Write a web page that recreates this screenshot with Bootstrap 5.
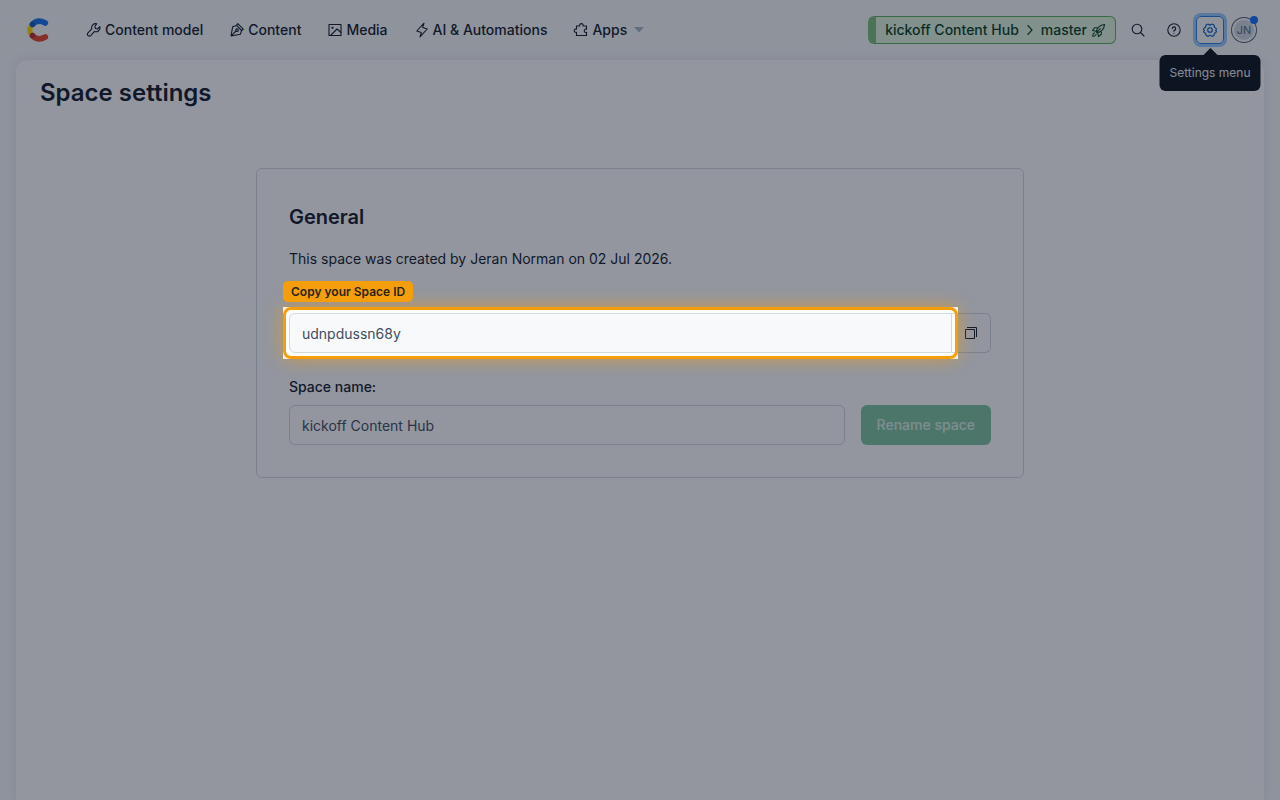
<!DOCTYPE html>
<html lang="en">
<head>
<meta charset="utf-8">
<meta name="viewport" content="width=device-width, initial-scale=1">
<title>Space settings</title>
<link href="https://cdn.jsdelivr.net/npm/bootstrap@5.3.0/dist/css/bootstrap.min.css" rel="stylesheet">
<style>
body{font-family:Inter,"Liberation Sans",sans-serif;font-size:14px;line-height:20px;color:#111b2b;background:#f7f9fa;overflow-x:hidden}
svg{display:block;flex:none}
.line-icon{fill:none;stroke:currentColor;stroke-width:1.1;stroke-linecap:round;stroke-linejoin:round}
.topbar{height:60px;padding:0 24px 0 26px}
.main-nav{gap:26px;margin-left:36px}
.main-nav .nav-link{display:flex;align-items:center;gap:3px;padding:0;color:#111b2b;font-weight:500;white-space:nowrap}
.env-btn{height:28px;padding:0 9px;border:1px solid #5dae5d;border-left:8px solid #7dc27d;border-radius:6px;background:#e2f6df;color:#063f22;font-size:14px;font-weight:500;white-space:nowrap}
.tool-btn{width:28px;height:28px;padding:0;border:0;border-radius:5px;background:transparent;color:#111b2b;display:flex;align-items:center;justify-content:center}
.tool-btn.is-focused{border:1px solid #2a7be0;box-shadow:0 0 0 3px #98cbff;color:#0059c8}
.avatar-btn{width:24px;height:24px;padding:0;border:2px solid #f7f9fa;border-radius:50%;background:#cfd9e0;box-shadow:0 0 0 1px #536171;color:#5a6a7c;font-size:11px;line-height:20px}
.avatar-dot{position:absolute;top:-2px;right:-2px;width:8px;height:8px;border-radius:50%;background:#0f6fff}
.menu-tip{position:absolute;top:39px;left:50%;transform:translateX(-50%);padding:8px 10px;border-radius:6px;background:#0c141c;color:#e7ebee;font-size:12px;white-space:nowrap;z-index:5}
.menu-tip::before{content:"";position:absolute;top:-7px;left:50%;margin-left:-7px;border:7px solid transparent;border-top:0;border-bottom-color:#0c141c}
.sheet{margin:0 16px;padding:17px 24px;border-radius:12px 12px 0 0;background:#fff;box-shadow:0 0 12px rgba(60,60,140,.1)}
.page-title{font-size:24px;line-height:32px;font-weight:600;margin:0}
.panel{max-width:768px;margin:59px auto 0;padding:32px;border:1px solid #cfd9e0;border-radius:6px}
.panel-title{font-size:20px;line-height:32px;font-weight:600;margin:0 0 16px}
.id-row{margin:44px 0 24px}
.field{height:40px;border:1px solid #cfd9e0;border-radius:6px;padding:0 12px;font-size:14px;color:#414d63;background:#fff}
.field:focus{box-shadow:none}
.field[readonly]{background:#f7f9fa;border-radius:6px 0 0 6px}
.copy-btn{width:39px;height:40px;padding:0;border:1px solid #cfd9e0;border-left:0;border-radius:0 6px 6px 0;background:#fff;color:#111b2b;display:flex;align-items:center;justify-content:center}
.rename-btn{height:40px;padding:0 16px;border:0;border-radius:6px;font-size:14px;font-weight:500;white-space:nowrap}
.rename-btn:disabled{background:#80c5a0;color:#dcefe4}
.spotlight{position:absolute;inset:-6px;z-index:20;box-shadow:0 0 0 9999px rgba(15,23,42,.45);pointer-events:none}
.spotlight::after{content:"";position:absolute;inset:0;border:3px solid #f59e0b;border-radius:8px;box-shadow:0 0 18px rgba(245,158,11,.6)}
.spot-label{position:absolute;left:-6px;bottom:51px;z-index:21;padding:1px 8px 0;border-radius:5px;background:#f59e0b;color:#292416;font-size:12px;font-weight:600;white-space:nowrap}
</style>
</head>
<body class="min-vh-100 d-flex flex-column">
<header class="topbar d-flex align-items-center">
  <a href="#" aria-label="Home">
    <svg width="24" height="26" viewBox="0 0 24 26" fill="none" stroke-linecap="round" stroke-width="5.600">
      <path d="M6 7.500Q1.500 13 6 18.500" stroke="#ffda00" stroke-width="5"/>
      <path d="M6.500 7.200Q12 1.500 19.300 6" stroke="#1773eb"/>
      <path d="M6.500 18.800Q12 24.500 19.300 20" stroke="#e8432b"/>
      <circle cx="6.500" cy="7.500" r="2.700" fill="#155bb9"/><circle cx="6.500" cy="18.500" r="2.700" fill="#bd2c31"/>
    </svg>
  </a>
  <nav class="main-nav d-flex" aria-label="Main">
    <a class="nav-link" href="#"><svg class="line-icon" width="16" height="16" viewBox="0 0 16 16"><path d="M10.700 1.800a4 4 0 0 0-4.900 5L2 10.900a1.800 1.800 0 0 0 2.700 2.700l3.800-4.200a4 4 0 0 0 5.400-4.700l-2.500 2.300-2-.5-.5-2z"/></svg>Content model</a>
    <a class="nav-link" href="#"><svg class="line-icon" width="16" height="16" viewBox="0 0 16 16"><path d="M8.800 1.700 14.300 7.200 12.600 8.500 11.400 12.200 2 14 3.700 4.700 7.500 3.400zM7.500 3.400 12.600 8.500M2.200 13.800 7 9"/><circle cx="8" cy="8.200" r="1.300"/></svg>Content</a>
    <a class="nav-link" href="#"><svg class="line-icon" width="16" height="16" viewBox="0 0 16 16"><rect x="2" y="2.500" width="12" height="11"/><path d="M3.500 13.500 10 7l4 3.500"/><circle cx="5.500" cy="5.800" r=".6"/></svg>Media</a>
    <a class="nav-link" href="#"><svg class="line-icon" width="16" height="16" viewBox="0 0 16 16"><path d="M10 1.200 2.800 9l4.500 1.600L6 14.800l7.200-7.800-4.500-1.600z"/></svg>AI &amp; Automations</a>
    <a class="nav-link" href="#"><svg class="line-icon" width="16" height="16" viewBox="0 0 16 16"><path d="M3.500 4h3.200a1.800 1.800 0 1 1 3.400 0h3.400v3.200a1.700 1.700 0 1 0 0 3.200v3.100h-10v-3.200a1.700 1.700 0 1 1 0-3.200z"/></svg>Apps<svg class="ms-1" width="10" height="6" viewBox="0 0 10 6"><path d="M0 0h10L5 5.500z" fill="#a5b6c2"/></svg></a>
  </nav>
  <div class="ms-auto d-flex align-items-center gap-2">
    <button class="env-btn d-flex align-items-center" type="button">
      <span class="me-2">kickoff Content Hub</span>
      <svg class="line-icon me-2" width="6" height="12" viewBox="0 0 6 12"><path d="M.8 1.500 5 6 .8 10.500"/></svg>
      <span class="me-1">master</span>
      <svg class="line-icon" width="15" height="15" viewBox="0 0 16 16"><path d="M5.500 9.500C6.500 5 9.500 2 14.500 1.500 14 6.500 11 9.500 6.500 10.500zM6 10l4-4M6.500 5H4L1.500 8l4 .8M11 9.500V12l-3 2.500-.8-4M3.800 10.500c-1.500.5-2 2.500-2 3.700 1.200 0 3.200-.5 3.700-2"/></svg>
    </button>
    <button class="tool-btn" type="button" aria-label="Search"><svg class="line-icon" width="16" height="16" viewBox="0 0 16 16"><circle cx="7" cy="7" r="4.800"/><path d="M10.500 10.500 14 14"/></svg></button>
    <button class="tool-btn" type="button" aria-label="Help"><svg class="line-icon" width="16" height="16" viewBox="0 0 16 16"><circle cx="8" cy="8" r="6.200"/><path d="M6.300 6.500a1.700 1.700 0 1 1 1.700 1.800v.9M8 11.200v.1"/></svg></button>
    <div class="position-relative">
      <button class="tool-btn is-focused" type="button" aria-label="Settings" aria-describedby="settings-tip"><svg class="line-icon" width="16" height="16" viewBox="0 0 16 16"><path d="M5 2.300h1.500L8 3.300l1.500-1H11l1.200 1.200.2 1.700 1.500.9.600 1.200-.9 1 .9 1-.6 1.200-1.500.7-.2 1.700-1.200 1.200H9.500l-1.500-1-1.500 1H5l-1.200-1.200-.2-1.700-1.500-.7-.6-1.200.9-1-.9-1 .6-1.200 1.500-.9.2-1.700z"/><circle cx="8" cy="8" r="2.300"/></svg></button>
      <div class="menu-tip" id="settings-tip" role="tooltip">Settings menu</div>
    </div>
    <div class="position-relative d-flex">
      <button class="avatar-btn" type="button" aria-label="Account">JN</button>
      <span class="avatar-dot"></span>
    </div>
  </div>
</header>
<main class="sheet flex-grow-1">
  <h1 class="page-title">Space settings</h1>
  <section class="panel">
    <h2 class="panel-title">General</h2>
    <p class="mb-0">This space was created by Jeran Norman on 02 Jul 2026.</p>
    <div class="d-flex id-row">
      <div class="position-relative flex-grow-1">
        <input class="field w-100 d-block" type="text" value="udnpdussn68y" aria-label="Space ID" readonly>
        <div class="spotlight"></div>
        <div class="spot-label">Copy your Space ID</div>
      </div>
      <button class="copy-btn" type="button" aria-label="Copy Space ID"><svg width="14" height="14" viewBox="0 0 14 14" fill="none" stroke="currentColor"><path d="M1.500 3.500h9v9h-9zM3 1.500h9.500V11"/></svg></button>
    </div>
    <label class="d-block mb-2 fw-medium" for="space-name">Space name:</label>
    <div class="d-flex gap-3">
      <input class="field flex-grow-1" id="space-name" type="text" value="kickoff Content Hub">
      <button class="rename-btn" type="button" disabled>Rename space</button>
    </div>
  </section>
</main>
<script src="https://cdn.jsdelivr.net/npm/bootstrap@5.3.0/dist/js/bootstrap.bundle.min.js"></script>
</body>
</html>
